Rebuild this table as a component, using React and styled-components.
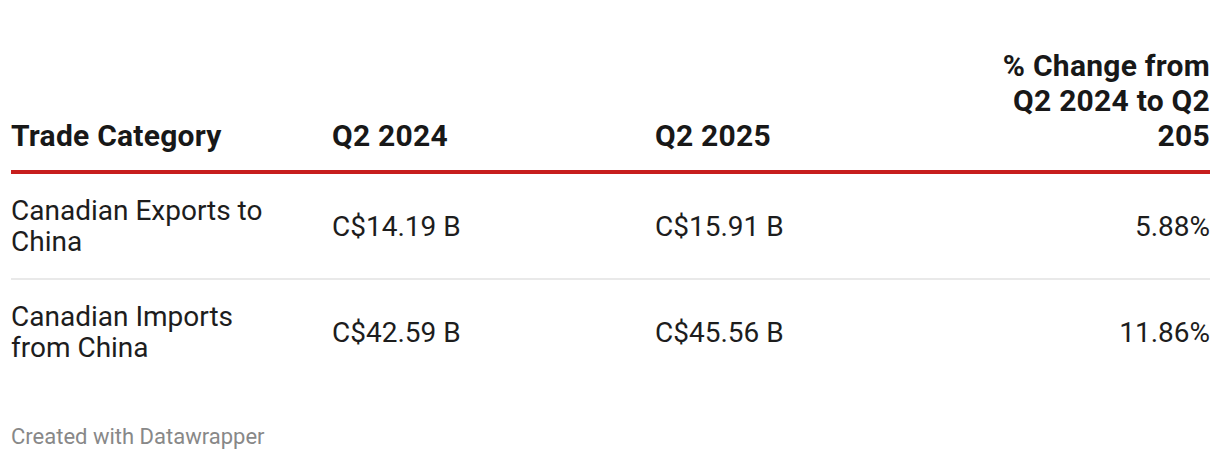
import React from "react";
import styled, { createGlobalStyle } from "styled-components";

const Global = createGlobalStyle`
  html, body { margin: 0; padding: 0; background: #fff; }
  body { font-family: Roboto, "Liberation Sans", sans-serif; color: #1d1d1d; }
`;

const Wrap = styled.div`
  width: 1199px;
  padding: 48px 10px 0 11px;
`;

const Table = styled.div`
  display: grid;
  grid-template-columns: 321px 323px 1fr 230px;
`;

const HeadCell = styled.div`
  font-weight: 700;
  font-size: 30px;
  line-height: 35px;
  letter-spacing: 0.25px;
  color: #181818;
  padding-bottom: 17px;
  padding-right: ${(p) => (p.$first ? "50px" : "0")};
  border-bottom: 4px solid #c71e1d;
  display: flex;
  align-items: flex-end;
  justify-content: ${(p) => (p.$right ? "flex-end" : "flex-start")};
  text-align: ${(p) => (p.$right ? "right" : "left")};
`;

const Cell = styled.div`
  font-size: 28px;
  line-height: 31px;
  color: #1d1d1d;
  padding: 21px ${(p) => (p.$first ? "50px" : "0")} 21px 0;
  display: flex;
  align-items: center;
  justify-content: ${(p) => (p.$right ? "flex-end" : "flex-start")};
  text-align: ${(p) => (p.$right ? "right" : "left")};
  border-bottom: ${(p) => (p.$divider ? "2px solid #e9e9e9" : "none")};
`;

const Footer = styled.div`
  margin-top: 40px;
  font-size: 22px;
  color: #888;
`;

const rows = [
  ["Canadian Exports to China", "C$14.19 B", "C$15.91 B", "5.88%"],
  ["Canadian Imports from China", "C$42.59 B", "C$45.56 B", "11.86%"],
];

export default function App() {
  return (
    <>
      <Global />
      <Wrap>
        <Table>
          <HeadCell $first>Trade Category</HeadCell>
          <HeadCell>Q2 2024</HeadCell>
          <HeadCell>Q2 2025</HeadCell>
          <HeadCell $right>% Change from Q2 2024 to Q2 205</HeadCell>
          {rows.map((r, i) =>
            r.map((v, j) => (
              <Cell
                key={i + "-" + j}
                $first={j === 0}
                $right={j === 3}
                $divider={i < rows.length - 1}
              >
                {v}
              </Cell>
            ))
          )}
        </Table>
        <Footer>Created with Datawrapper</Footer>
      </Wrap>
    </>
  );
}
